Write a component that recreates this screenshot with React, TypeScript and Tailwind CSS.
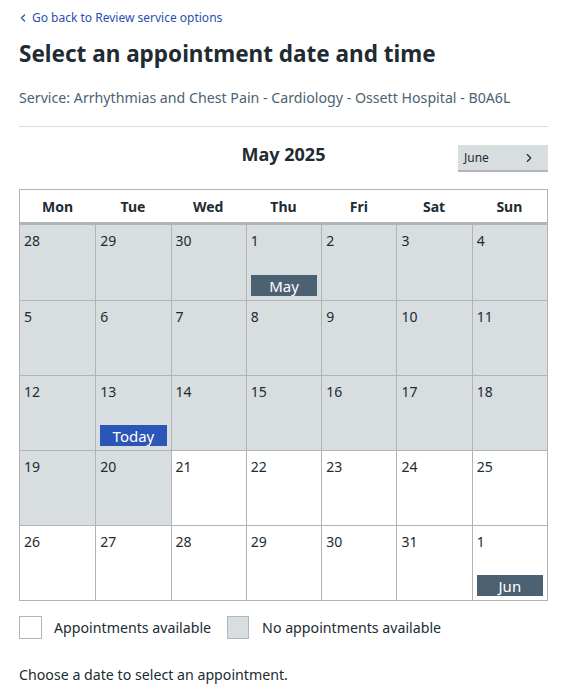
import { ChevronLeft, ChevronRight } from 'lucide-react';

type Day = {
  n: number;
  empty: boolean;
  badge?: 'May' | 'Today' | 'Jun';
};

const weekdays = ['Mon', 'Tue', 'Wed', 'Thu', 'Fri', 'Sat', 'Sun'];

const weeks: Day[][] = [
  [
    { n: 28, empty: true },
    { n: 29, empty: true },
    { n: 30, empty: true },
    { n: 1, empty: true, badge: 'May' },
    { n: 2, empty: true },
    { n: 3, empty: true },
    { n: 4, empty: true },
  ],
  [5, 6, 7, 8, 9, 10, 11].map((n) => ({ n, empty: true })),
  [
    { n: 12, empty: true },
    { n: 13, empty: true, badge: 'Today' },
    { n: 14, empty: true },
    { n: 15, empty: true },
    { n: 16, empty: true },
    { n: 17, empty: true },
    { n: 18, empty: true },
  ],
  [
    { n: 19, empty: true },
    { n: 20, empty: true },
    { n: 21, empty: false },
    { n: 22, empty: false },
    { n: 23, empty: false },
    { n: 24, empty: false },
    { n: 25, empty: false },
  ],
  [
    { n: 26, empty: false },
    { n: 27, empty: false },
    { n: 28, empty: false },
    { n: 29, empty: false },
    { n: 30, empty: false },
    { n: 31, empty: false },
    { n: 1, empty: false, badge: 'Jun' },
  ],
];

function Badge({ label }: { label: string }) {
  const color = label === 'Today' ? 'bg-[#2c55b8]' : 'bg-[#4c6272]';
  return (
    <div className={`${color} mx-1 mb-1 h-[21px] flex items-center justify-center text-white text-[15px]`}>
      {label}
    </div>
  );
}

export default function App() {
  return (
    <div className="px-[19px] pt-[9px] text-[#212b32]" style={{ fontFamily: '"Noto Sans", sans-serif' }}>
      <a href="#" className="flex items-center gap-[3px] text-[12px] text-[#2a4fb0]">
        <ChevronLeft size={12} strokeWidth={2.5} className="-ml-[2px]" />
        Go back to Review service options
      </a>

      <h1 className="mt-[11px] text-[22.5px] font-bold leading-[32px]">Select an appointment date and time</h1>

      <p className="mt-[17px] text-[14.2px] text-[#4c6272]">
        Service: Arrhythmias and Chest Pain - Cardiology - Ossett Hospital - B0A6L
      </p>

      <hr className="mt-[18px] border-[#d8dde0]" />

      <div className="mt-[18px] flex items-center justify-between">
        <div className="w-[90px]" />
        <h2 className="text-[18px] font-bold -mt-[8px]">May 2025</h2>
        <button className="w-[90px] h-[27px] bg-[#d8dde0] border-b-2 border-[#aeb7bd] flex items-center justify-between pl-[6px] pr-[12px] text-[12px]">
          June
          <ChevronRight size={14} strokeWidth={2} />
        </button>
      </div>

      <div className="mt-[17px] border border-[#b1b4b6]">
        <div className="grid grid-cols-7 h-[35px] border-b-[3px] border-[#b1b4b6]">
          {weekdays.map((d) => (
            <div key={d} className="flex items-center justify-center text-[14px] font-bold">
              {d}
            </div>
          ))}
        </div>
        {weeks.map((week, wi) => (
          <div key={wi} className={`grid grid-cols-7 h-[75px] ${wi > 0 ? 'border-t border-[#b1b4b6]' : ''}`}>
            {week.map((day, di) => (
              <div
                key={di}
                className={`flex flex-col justify-between ${day.empty ? 'bg-[#d8dde0]' : 'bg-white'} ${
                  di > 0 ? 'border-l border-[#b1b4b6]' : ''
                }`}
              >
                <span className="pl-[4px] pt-[5px] text-[14px]">{day.n}</span>
                {day.badge && <Badge label={day.badge} />}
              </div>
            ))}
          </div>
        ))}
      </div>

      <div className="mt-[15px] flex items-center text-[14.2px]">
        <span className="w-[23px] h-[23px] border border-[#aeb7bd] bg-white" />
        <span className="ml-[12px]">Appointments available</span>
        <span className="ml-[16px] w-[22px] h-[23px] border border-[#aeb7bd] bg-[#d8dde0]" />
        <span className="ml-[13px]">No appointments available</span>
      </div>

      <p className="mt-[25px] text-[14.2px]">Choose a date to select an appointment.</p>
    </div>
  );
}
